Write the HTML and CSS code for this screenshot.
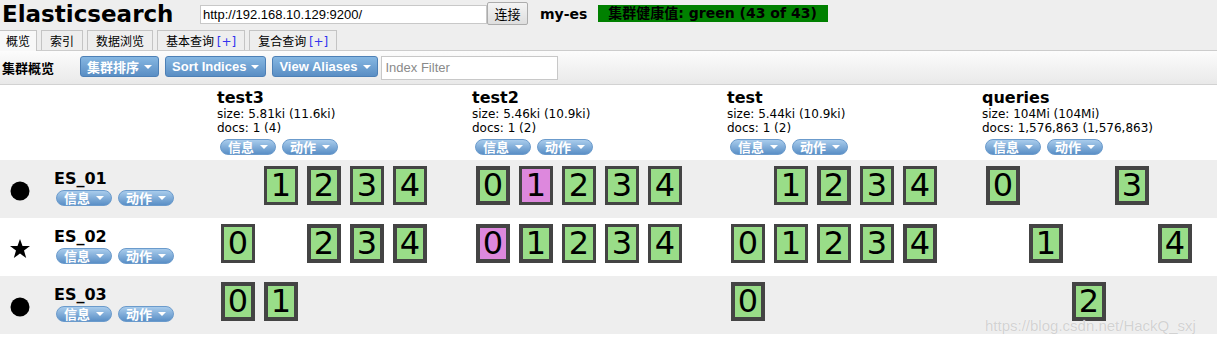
FILE: index.html
```html
<!DOCTYPE html>
<html lang="zh">
<head>
    <meta charset="UTF-8">
    <title>Elasticsearch</title>
    <link rel="stylesheet" href="styles.css">
</head>
<body>
    <header class="header">
        <div class="topbar">
            <h1 class="brand">Elasticsearch</h1>
            <input class="url" type="text" value="http://192.168.10.129:9200/">
            <button class="connect">连接</button>
            <span class="cluster-name">my-es</span>
            <span class="health">集群健康值: green (43 of 43)</span>
        </div>
        <ul class="tabs">
            <li class="tab active">概览</li>
            <li class="tab">索引</li>
            <li class="tab">数据浏览</li>
            <li class="tab">基本查询 <span class="add">[+]</span></li>
            <li class="tab">复合查询 <span class="add">[+]</span></li>
        </ul>
    </header>

    <div class="toolbar">
        <h2>集群概览</h2>
        <button class="tb-btn">集群排序 <i class="caret"></i></button>
        <button class="tb-btn">Sort Indices <i class="caret"></i></button>
        <button class="tb-btn">View Aliases <i class="caret"></i></button>
        <input class="filter" type="text" placeholder="Index Filter">
    </div>

    <div class="overview">
        <div class="row head">
            <div></div>
            <div class="index">
                <div class="idx-name">test3</div>
                <div class="idx-meta">size: 5.81ki (11.6ki)</div>
                <div class="idx-meta">docs: 1 (4)</div>
                <div class="pills"><span class="pill">信息 <i class="caret"></i></span><span class="pill">动作 <i class="caret"></i></span></div>
            </div>
            <div class="index">
                <div class="idx-name">test2</div>
                <div class="idx-meta">size: 5.46ki (10.9ki)</div>
                <div class="idx-meta">docs: 1 (2)</div>
                <div class="pills"><span class="pill">信息 <i class="caret"></i></span><span class="pill">动作 <i class="caret"></i></span></div>
            </div>
            <div class="index">
                <div class="idx-name">test</div>
                <div class="idx-meta">size: 5.44ki (10.9ki)</div>
                <div class="idx-meta">docs: 1 (2)</div>
                <div class="pills"><span class="pill">信息 <i class="caret"></i></span><span class="pill">动作 <i class="caret"></i></span></div>
            </div>
            <div class="index">
                <div class="idx-name">queries</div>
                <div class="idx-meta">size: 104Mi (104Mi)</div>
                <div class="idx-meta">docs: 1,576,863 (1,576,863)</div>
                <div class="pills"><span class="pill">信息 <i class="caret"></i></span><span class="pill">动作 <i class="caret"></i></span></div>
            </div>
        </div>

        <div class="row node alt">
            <div class="node-cell">
                <svg class="node-icon" viewBox="0 0 20 20"><circle cx="10" cy="10" r="9.5"/></svg>
                <div class="node-info">
                    <div class="node-name">ES_01</div>
                    <div class="pills"><span class="pill">信息 <i class="caret"></i></span><span class="pill">动作 <i class="caret"></i></span></div>
                </div>
            </div>
            <div class="shards">
                <span class="shard none">0</span><span class="shard">1</span><span class="shard primary">2</span><span class="shard">3</span><span class="shard">4</span>
            </div>
            <div class="shards">
                <span class="shard primary">0</span><span class="shard moving">1</span><span class="shard">2</span><span class="shard">3</span><span class="shard">4</span>
            </div>
            <div class="shards">
                <span class="shard none">0</span><span class="shard">1</span><span class="shard primary">2</span><span class="shard">3</span><span class="shard">4</span>
            </div>
            <div class="shards">
                <span class="shard primary">0</span><span class="shard none">1</span><span class="shard none">2</span><span class="shard primary">3</span>
            </div>
        </div>

        <div class="row node">
            <div class="node-cell">
                <svg class="node-icon" viewBox="0 0 20 20"><polygon points="10,0 12.5,7 20,7.1 14,11.6 16.2,19 10,14.6 3.8,19 6,11.6 0,7.1 7.5,7"/></svg>
                <div class="node-info">
                    <div class="node-name">ES_02</div>
                    <div class="pills"><span class="pill">信息 <i class="caret"></i></span><span class="pill">动作 <i class="caret"></i></span></div>
                </div>
            </div>
            <div class="shards">
                <span class="shard">0</span><span class="shard none">1</span><span class="shard primary">2</span><span class="shard primary">3</span><span class="shard primary">4</span>
            </div>
            <div class="shards">
                <span class="shard primary moving">0</span><span class="shard primary">1</span><span class="shard">2</span><span class="shard">3</span><span class="shard">4</span>
            </div>
            <div class="shards">
                <span class="shard">0</span><span class="shard">1</span><span class="shard">2</span><span class="shard">3</span><span class="shard primary">4</span>
            </div>
            <div class="shards">
                <span class="shard none">0</span><span class="shard primary">1</span><span class="shard none">2</span><span class="shard none">3</span><span class="shard primary">4</span>
            </div>
        </div>

        <div class="row node alt">
            <div class="node-cell">
                <svg class="node-icon" viewBox="0 0 20 20"><circle cx="10" cy="10" r="9.5"/></svg>
                <div class="node-info">
                    <div class="node-name">ES_03</div>
                    <div class="pills"><span class="pill">信息 <i class="caret"></i></span><span class="pill">动作 <i class="caret"></i></span></div>
                </div>
            </div>
            <div class="shards">
                <span class="shard primary">0</span><span class="shard primary">1</span>
            </div>
            <div class="shards"></div>
            <div class="shards">
                <span class="shard primary">0</span>
            </div>
            <div class="shards">
                <span class="shard none">0</span><span class="shard none">1</span><span class="shard primary">2</span>
            </div>
        </div>
    </div>

    <div class="watermark">https://blog.csdn.net/HackQ_sxj</div>
</body>
</html>
```

FILE: styles.css
```css
:root {
    --header-bg: #eee;
    --line: #ccc;
    --shard-green: #99dd88;
    --shard-pink: #dd88dd;
    --shard-border: #444;
}

body {
    position: relative;
    margin: 0;
    background: #fff;
    color: #000;
    font-family: "DejaVu Sans", Verdana, "Noto Sans CJK SC", sans-serif;
    font-size: 12px;
}

/* header */
.header {
    background: var(--header-bg);
}
.topbar {
    display: flex;
    align-items: flex-start;
    height: 30px;
}
.brand {
    box-sizing: border-box;
    width: 200px;
    margin: 0;
    padding-left: 2px;
    font-size: 23px;
    font-weight: bold;
    line-height: 29px;
}
.url {
    box-sizing: border-box;
    width: 287px;
    height: 19px;
    margin: 5px 0 0;
    padding: 0 2px;
    border: 1px solid #c8c8c8;
    background: #fff;
    font: 13px "Liberation Sans", Arial, sans-serif;
}
.connect {
    box-sizing: border-box;
    width: 41px;
    height: 23px;
    margin: 2px 0 0;
    padding: 0;
    border: 1px solid #acacac;
    border-radius: 2px;
    background: linear-gradient(#f4f4f4, #dedede);
    font: 13px "Noto Sans CJK SC", sans-serif;
}
.cluster-name {
    margin: 6px 0 0 12px;
    font-size: 14px;
    font-weight: bold;
    line-height: 17px;
}
.health {
    margin: 5px 0 0 11px;
    padding: 0 11px 0 10px;
    height: 17px;
    background: #008000;
    font-size: 14px;
    font-weight: bold;
    line-height: 17px;
}

.tabs {
    display: flex;
    gap: 4px;
    height: 20px;
    margin: 0;
    padding: 0;
    list-style: none;
    border-bottom: 1px solid var(--line);
}
.tab {
    padding: 0 8px;
    border: 1px solid #c4c4c4;
    border-bottom: 0;
    font-family: "Noto Sans CJK SC", sans-serif;
    font-size: 12px;
    line-height: 19px;
}
.tab.active {
    padding: 0 6px;
    height: 20px;
    border-left: 0;
    background: #f8f8f8;
}
.tab .add {
    color: #3333ee;
    font-family: "DejaVu Sans", sans-serif;
}

/* toolbar */
.toolbar {
    display: flex;
    align-items: center;
    height: 33px;
    padding-left: 2px;
    background: linear-gradient(#fcfcfc, #e9e9e9);
    border-bottom: 1px solid #d2d2d2;
}
.toolbar h2 {
    width: 78px;
    margin: 0;
    font-family: "Noto Sans CJK SC", sans-serif;
    font-size: 13px;
    font-weight: bold;
}
.tb-btn {
    display: flex;
    align-items: center;
    gap: 5px;
    box-sizing: border-box;
    height: 21px;
    margin: -2px 6px 0 0;
    padding: 0 6px;
    border: 1px solid #4d80b6;
    border-radius: 3px;
    background: linear-gradient(#86b7e2, #5a8ec4);
    color: #fff;
    font: bold 13px "Liberation Sans", "Noto Sans CJK SC", sans-serif;
}
.caret {
    display: inline-block;
    width: 0;
    height: 0;
    border-left: 4px solid transparent;
    border-right: 4px solid transparent;
    border-top: 4px solid #fff;
}
.filter {
    box-sizing: border-box;
    width: 177px;
    height: 24px;
    margin: 0 0 0 -3px;
    padding: 0 4px;
    border: 1px solid #c8c8c8;
    font: 13px "Liberation Sans", Arial, sans-serif;
}
.filter::placeholder {
    color: #8a8a8a;
}

/* cluster overview */
.row {
    display: grid;
    grid-template-columns: 217px repeat(4, 255px);
}
.row.head {
    height: 75px;
}
.row.node {
    height: 58px;
}
.row.alt {
    background: #eee;
}

.index {
    padding-top: 3px;
}
.idx-name {
    font-size: 16px;
    font-weight: bold;
    line-height: 19px;
}
.idx-meta {
    line-height: 14px;
}

.pills {
    display: flex;
    gap: 6px;
    margin-top: 4px;
    padding-left: 3px;
}
.pill {
    display: flex;
    align-items: center;
    gap: 6px;
    box-sizing: border-box;
    height: 16px;
    padding: 0 7px;
    border: 1px solid #6b9bcc;
    border-radius: 8px;
    background: linear-gradient(#a9ccec, #5a8fc6);
    color: #fff;
    font-family: "Noto Sans CJK SC", sans-serif;
    font-size: 13px;
    font-weight: bold;
    line-height: 14px;
}

.node-cell {
    display: flex;
}
.node-icon {
    width: 20px;
    height: 20px;
    margin: 21px 0 0 10px;
}
.node-info {
    margin-left: 24px;
    padding-top: 9px;
}
.node-name {
    font-size: 16px;
    font-weight: bold;
    line-height: 19px;
}
.node-info .pills {
    margin-top: 2px;
    padding-left: 2px;
}

.shards {
    display: flex;
    gap: 9px;
    padding: 6px 0 0 4px;
}
.shard {
    box-sizing: border-box;
    width: 34px;
    height: 39px;
    border: 3px solid var(--shard-border);
    background: var(--shard-green);
    font-size: 32px;
    line-height: 33px;
    text-align: center;
}
.shard.primary {
    border-width: 4px;
    line-height: 31px;
}
.shard.moving {
    background: var(--shard-pink);
}
.shard.none {
    visibility: hidden;
}

.watermark {
    position: absolute;
    left: 985px;
    top: 317px;
    color: rgba(205, 205, 205, 0.9);
    font: 15px "Liberation Sans", Arial, sans-serif;
    text-shadow: 0 0 1px #fff;
}
```
